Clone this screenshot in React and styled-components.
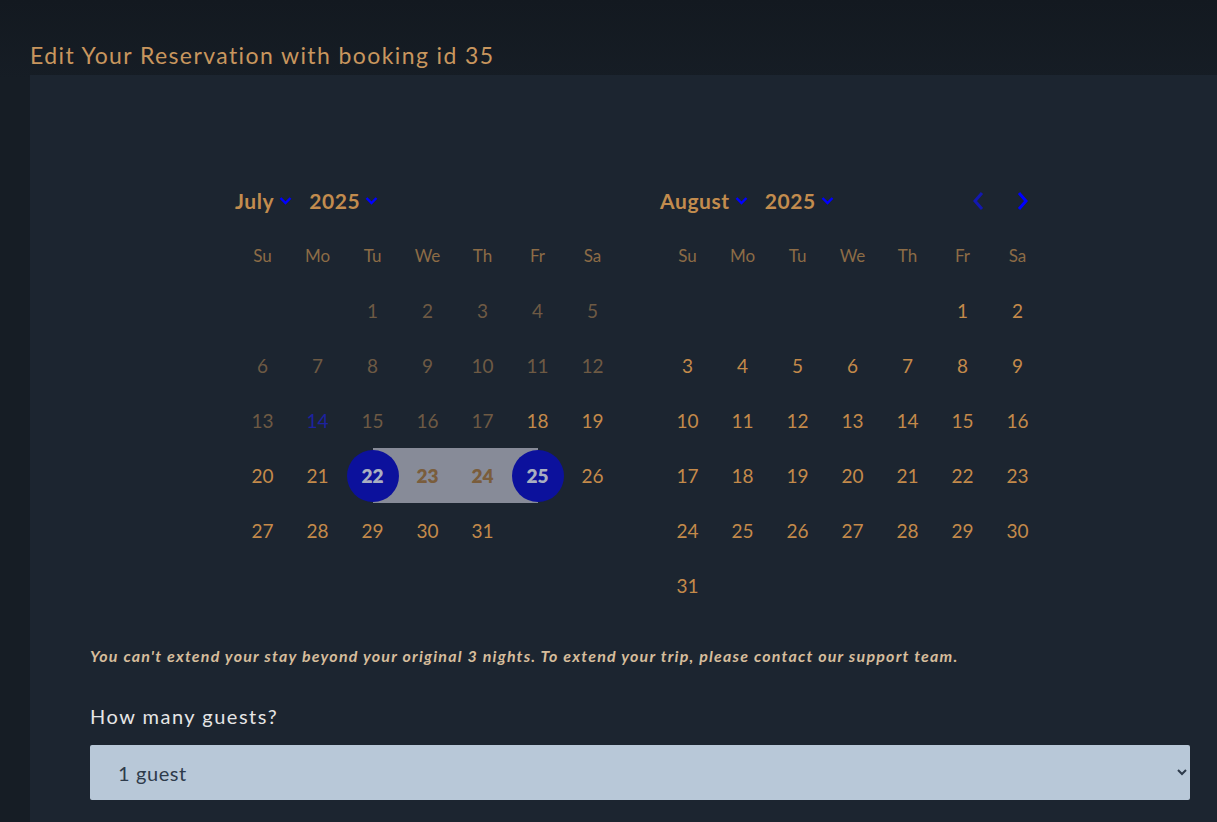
import React from "react";
import styled, { createGlobalStyle } from "styled-components";

const GlobalStyle = createGlobalStyle`
  body {
    margin: 0;
    background: #151b23;
    font-family: "Lato", "Open Sans", sans-serif;
  }
`;

const DAY_NAMES = ["Su", "Mo", "Tu", "We", "Th", "Fr", "Sa"];

const months = [
  { name: "July", year: 2025, offset: 2, days: 31 },
  { name: "August", year: 2025, offset: 5, days: 31 },
];

function dayState(month, d) {
  if (month !== "July") return { kind: "active" };
  if (d === 22) return { kind: "start" };
  if (d === 25) return { kind: "end" };
  if (d === 23 || d === 24) return { kind: "middle" };
  if (d === 14) return { kind: "today" };
  if (d < 18) return { kind: "disabled" };
  return { kind: "active" };
}

function Chevron() {
  return (
    <svg width="13" height="9" viewBox="0 0 13 9">
      <path d="M1.5 2 L6.5 7 L11.5 2" fill="none" stroke="#0000ff" strokeWidth="2.4" />
    </svg>
  );
}

function Arrow({ dir, color }) {
  const d = dir === "left" ? "M10 2 L3 10 L10 18" : "M3 2 L10 10 L3 18";
  return (
    <svg width="13" height="20" viewBox="0 0 13 20">
      <path d={d} fill="none" stroke={color} strokeWidth="3" />
    </svg>
  );
}

function Month({ month, nav }) {
  const cells = [];
  for (let i = 0; i < month.offset; i++) cells.push(null);
  for (let d = 1; d <= month.days; d++) cells.push(d);
  return (
    <MonthBox>
      <MonthHeader>
        <Picker>
          {month.name}
          <Chevron />
        </Picker>
        <Picker>
          {month.year}
          <Chevron />
        </Picker>
        {nav && (
          <Nav>
            <Arrow dir="left" color="#1318b0" />
            <Arrow dir="right" color="#0000ff" />
          </Nav>
        )}
      </MonthHeader>
      <Grid>
        {DAY_NAMES.map((n) => (
          <DayName key={n}>{n}</DayName>
        ))}
        {cells.map((d, i) => {
          if (d === null) return <Cell key={"e" + i} />;
          const { kind } = dayState(month.name, d);
          return (
            <Cell key={d} $kind={kind}>
              <Day $kind={kind}>{d}</Day>
            </Cell>
          );
        })}
      </Grid>
    </MonthBox>
  );
}

export default function App() {
  return (
    <>
      <GlobalStyle />
      <Page>
        <Title>Edit Your Reservation with booking id 35</Title>
        <Panel>
          <Calendars>
            <Month month={months[0]} />
            <Month month={months[1]} nav />
          </Calendars>
          <Note>
            You can't extend your stay beyond your original 3 nights. To extend your trip, please
            contact our support team.
          </Note>
          <Label>How many guests?</Label>
          <Select defaultValue="1">
            <option value="1">1 guest</option>
            <option value="2">2 guests</option>
            <option value="3">3 guests</option>
          </Select>
        </Panel>
      </Page>
    </>
  );
}

const Page = styled.div`
  height: 822px;
  overflow: hidden;
  display: flex;
  flex-direction: column;
  background: linear-gradient(#131920, #161d25 80px);
  padding-top: 41px;
  box-sizing: border-box;
`;

const Title = styled.h1`
  margin: 0 0 6px 30px;
  height: 28px;
  font-size: 23px;
  line-height: 28px;
  font-weight: 400;
  color: #c8965e;
  letter-spacing: 1.4px;
`;

const Panel = styled.div`
  flex: 1;
  margin-left: 30px;
  background: #1c2530;
  padding: 98px 27px 30px 60px;
`;

const Calendars = styled.div`
  display: flex;
  gap: 40px;
  margin-left: 145px;
`;

const MonthBox = styled.div`
  width: 385px;
`;

const MonthHeader = styled.div`
  display: flex;
  align-items: center;
  height: 55px;
  gap: 17px;
`;

const Picker = styled.div`
  display: flex;
  align-items: center;
  gap: 5px;
  font-size: 21px;
  font-weight: 700;
  letter-spacing: 0.6px;
  color: #c28c4e;
`;

const Nav = styled.div`
  margin-left: auto;
  display: flex;
  gap: 31px;
  padding-right: 16px;
`;

const Grid = styled.div`
  display: grid;
  grid-template-columns: repeat(7, 55px);
  grid-auto-rows: 55px;
`;

const DayName = styled.div`
  display: flex;
  align-items: center;
  justify-content: center;
  font-size: 17px;
  color: #8c6c46;
`;

const bandFor = (kind) => {
  if (kind === "start") return "linear-gradient(90deg, transparent 50%, #878b98 50%)";
  if (kind === "end") return "linear-gradient(90deg, #878b98 50%, transparent 50%)";
  if (kind === "middle") return "#878b98";
  return "transparent";
};

const dayColor = {
  active: "#c48a4a",
  disabled: "#6e5a44",
  today: "#1d22a0",
  middle: "#7a5d3c",
  start: "#a9afc0",
  end: "#a9afc0",
};

const Cell = styled.div`
  display: flex;
  align-items: center;
  justify-content: center;
  background: ${(p) => bandFor(p.$kind)};
`;

const Day = styled.div`
  width: 52px;
  height: 52px;
  border-radius: 50%;
  display: flex;
  align-items: center;
  justify-content: center;
  font-size: 19px;
  font-weight: ${(p) => (["start", "end", "middle"].includes(p.$kind) ? 800 : 400)};
  color: ${(p) => dayColor[p.$kind]};
  background: ${(p) => (p.$kind === "start" || p.$kind === "end" ? "#0c119c" : "transparent")};
`;

const Note = styled.p`
  margin: 33px 0 0;
  font-size: 16px;
  line-height: 20px;
  font-style: italic;
  font-weight: 700;
  letter-spacing: 1.2px;
  color: #d6bd9c;
`;

const Label = styled.div`
  margin-top: 38px;
  font-size: 20px;
  line-height: 24px;
  letter-spacing: 1.5px;
  color: #e6e6e6;
`;

const Select = styled.select`
  display: block;
  margin-top: 17px;
  width: 100%;
  height: 55px;
  padding: 0 24px;
  border: none;
  border-radius: 2px;
  background: #b8c8d8;
  color: #2e3b4b;
  font-family: "Lato", sans-serif;
  font-size: 20px;
  letter-spacing: 0.6px;
`;
